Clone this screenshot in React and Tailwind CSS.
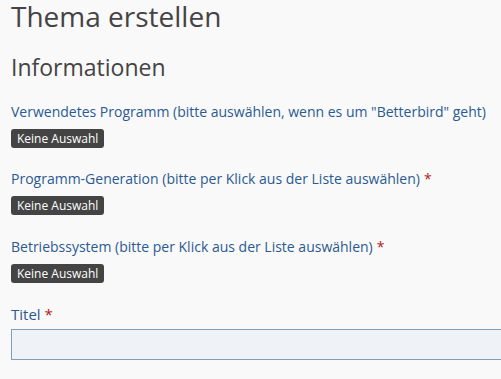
export default function App() {
  const Badge = () => (
    <div className="mt-[7px] flex">
      <span className="inline-flex h-[19px] items-center rounded-[3px] bg-[#444444] px-[6px] text-[12px] leading-[19px] text-white">
        Keine Auswahl
      </span>
    </div>
  );
  const Star = () => <span className="ml-[4px] text-[#b31b1b]">*</span>;
  const label = "whitespace-nowrap text-[14px] leading-[20px] text-[#2a5a92]";
  return (
    <div className="h-[379px] w-[501px] overflow-hidden bg-[#f9f9f9] pl-[11px] [font-family:'Open_Sans',sans-serif]">
      <h1 className="text-[28px] leading-[32px] text-[#444444]">Thema erstellen</h1>
      <h2 className="mt-[24px] text-[23px] leading-[23px] text-[#444444]">Informationen</h2>
      <div className="mt-[23px] flex flex-col">
        <div>
          <div className={label}>
            Verwendetes Programm (bitte auswählen, wenn es um "Betterbird" geht)
          </div>
          <Badge />
        </div>
        <div className="mt-[21px]">
          <div className={label}>
            Programm-Generation (bitte per Klick aus der Liste auswählen)<Star />
          </div>
          <Badge />
        </div>
        <div className="mt-[22px]">
          <div className={label}>
            Betriebssystem (bitte per Klick aus der Liste auswählen)<Star />
          </div>
          <Badge />
        </div>
        <div className="mt-[21px]">
          <div className="whitespace-nowrap text-[15px] leading-[20px] text-[#2a5a92]">
            Titel<Star />
          </div>
          <div className="mt-[5px] h-[31px] w-[520px] border border-[#7f9fbd] bg-[#eff3f8]"></div>
        </div>
      </div>
    </div>
  );
}
